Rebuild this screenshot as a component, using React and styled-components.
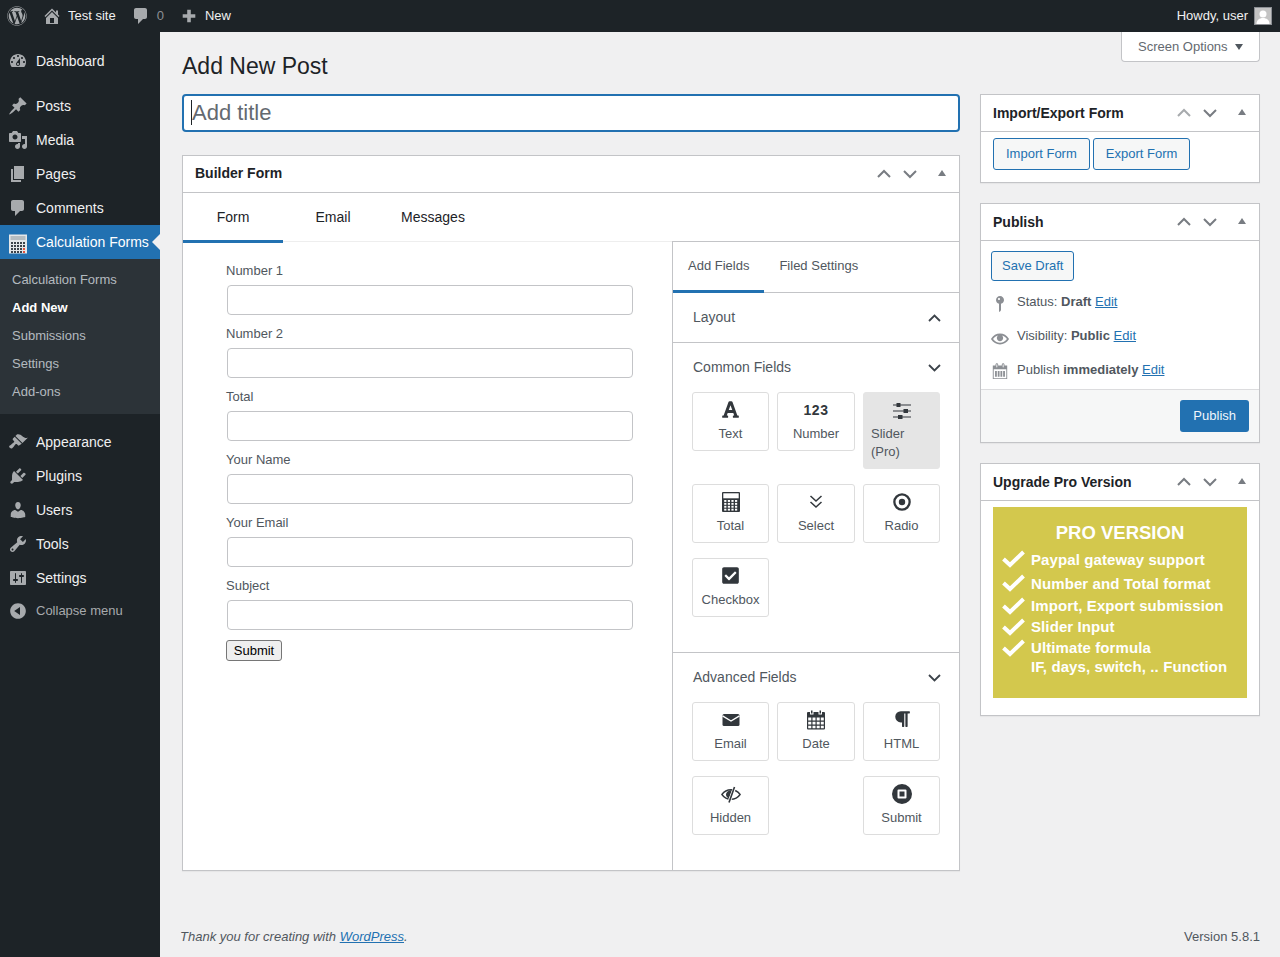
import React from "react";
import styled, { createGlobalStyle } from "styled-components";
import { FaWordpress, FaFont, FaParagraph, FaCheckSquare } from "react-icons/fa";

const GlobalStyle = createGlobalStyle`
  html, body { margin: 0; padding: 0; height: 100%; overflow: hidden; }
  body {
    background: #f0f0f1;
    color: #3c434a;
    font-family: "Liberation Sans", Arial, sans-serif;
    font-size: 13px;
    line-height: 1.4;
  }
  * { box-sizing: border-box; }
`;

// dashicons paths, all on a 20x20 grid
const paths = {
  dashboard: "M3.76 16h12.48c1.1-1.37 1.76-3.11 1.76-5 0-4.42-3.58-8-8-8s-8 3.58-8 8c0 1.89.66 3.63 1.76 5zM10 4c.55 0 1 .45 1 1s-.45 1-1 1-1-.45-1-1 .45-1 1-1zM6 6c.55 0 1 .45 1 1s-.45 1-1 1-1-.45-1-1 .45-1 1-1zm8 0c.55 0 1 .45 1 1s-.45 1-1 1-1-.45-1-1 .45-1 1-1zm-5.37 5.55L12 7v6c0 1.1-.9 2-2 2s-2-.9-2-2c0-.57.24-1.08.63-1.45zM4 10c.55 0 1 .45 1 1s-.45 1-1 1-1-.45-1-1 .45-1 1-1zm12 0c.55 0 1 .45 1 1s-.45 1-1 1-1-.45-1-1 .45-1 1-1zm-5 3c0-.55-.45-1-1-1s-1 .45-1 1 .45 1 1 1 1-.45 1-1z",
  post: "M10.44 3.02l1.82-1.82 6.36 6.35-1.83 1.82c-1.05-.68-2.48-.57-3.41.36l-.75.75c-.92.93-1.04 2.35-.35 3.41l-1.83 1.82-2.41-2.41-2.8 2.79c-.42.42-3.38 2.71-3.8 2.29s1.86-3.39 2.28-3.81l2.79-2.79L4.1 9.36l1.83-1.82c1.05.69 2.48.57 3.4-.36l.75-.75c.93-.92 1.05-2.35.36-3.41z",
  media: "M13 11V4c0-.55-.45-1-1-1h-1.67L9 1H5L3.67 3H2c-.55 0-1 .45-1 1v7c0 .55.45 1 1 1h10c.55 0 1-.45 1-1zM7 4.5c1.38 0 2.5 1.12 2.5 2.5S8.38 9.5 7 9.5 4.5 8.38 4.5 7 5.62 4.5 7 4.5zM14 6h5v10.5c0 1.38-1.12 2.5-2.5 2.5S14 17.88 14 16.5s1.12-2.5 2.5-2.5c.17 0 .34.02.5.05V9h-3V6zm-4 8.05V13h2v3.5c0 1.38-1.12 2.5-2.5 2.5S7 17.88 7 16.5 8.12 14 9.5 14c.17 0 .34.02.5.05z",
  page: "M6 15V2h10v13H6zm-1 1h8v2H3V5h2v11z",
  comment: "M5 2h9c1.1 0 2 .9 2 2v7c0 1.1-.9 2-2 2h-2l-5 5v-5H5c-1.1 0-2-.9-2-2V4c0-1.1.9-2 2-2z",
  appearance: "M14.48 11.06L7.41 3.99l1.5-1.5c.5-.56 2.3-.47 3.51.32 1.21.8 1.43 1.28 2.91 2.1 1.18.64 2.45 1.26 4.45.85zm-.71.71L6.7 4.7 4.93 6.47c-.39.39-.39 1.02 0 1.41l1.06 1.06c.39.39.39 1.03 0 1.42-.6.6-1.43 1.11-2.21 1.69-.35.26-.7.53-1.01.84C1.43 13.23.4 14.4 1.8 15.8c1.4 1.39 2.56.37 3.2-.28.31-.31.58-.66.84-1.01.58-.78 1.09-1.61 1.69-2.21.39-.39 1.03-.39 1.42 0l1.06 1.06c.39.39 1.02.39 1.41 0z",
  plugin: "M13.11 4.36L9.87 7.6 8 5.73l3.24-3.24c.35-.34 1.05-.2 1.56.32.52.51.66 1.21.31 1.55zm-8 1.77l.91-1.12 9.01 9.01-1.19.84c-.71.71-2.63 1.16-3.82 1.16H6.14L4.9 17.26c-.59.59-1.54.59-2.12 0-.59-.58-.59-1.53 0-2.12l1.24-1.24v-3.88c0-1.13.4-3.19 1.09-3.89zm7.26 3.97l3.24-3.24c.34-.35 1.04-.21 1.55.31.52.51.66 1.21.31 1.55l-3.24 3.25z",
  users: "M10 9.25c-2.27 0-2.73-3.44-2.73-3.44C7 4.02 7.82 2 9.97 2c2.16 0 2.98 2.02 2.71 3.81 0 0-.41 3.44-2.68 3.44zm0 2.57L12.72 10c2.39 0 4.52 2.33 4.52 4.53v2.49s-3.65 1.13-7.24 1.13c-3.65 0-7.24-1.13-7.24-1.13v-2.49c0-2.25 1.94-4.48 4.47-4.48z",
  tools: "M16.68 9.77c-1.34 1.34-3.3 1.67-4.95.99l-5.41 6.52c-.99.99-2.59.99-3.58 0s-.99-2.59 0-3.57l6.52-5.42c-.68-1.65-.35-3.61.99-4.95 1.28-1.28 3.12-1.62 4.72-1.06l-2.89 2.89 2.82 2.82 2.86-2.87c.53 1.58.18 3.39-1.08 4.65zM3.81 16.21c.4.39 1.04.39 1.43 0 .4-.4.4-1.04 0-1.43-.39-.4-1.03-.4-1.43 0-.39.39-.39 1.03 0 1.43z",
  settings: "M18 16V4c0-.55-.45-1-1-1H3c-.55 0-1 .45-1 1v12c0 .55.45 1 1 1h14c.55 0 1-.45 1-1zM8 11h1c.55 0 1 .45 1 1s-.45 1-1 1H8v1.5c0 .28-.22.5-.5.5s-.5-.22-.5-.5V13H6c-.55 0-1-.45-1-1s.45-1 1-1h1V5.5c0-.28.22-.5.5-.5s.5.22.5.5V11zm5-2h-1c-.55 0-1-.45-1-1s.45-1 1-1h1V5.5c0-.28.22-.5.5-.5s.5.22.5.5V7h1c.55 0 1 .45 1 1s-.45 1-1 1h-1v5.5c0 .28-.22.5-.5.5s-.5-.22-.5-.5V9z",
  collapse: "M10 2.16c4.33 0 7.84 3.51 7.84 7.84s-3.51 7.84-7.84 7.84S2.16 14.33 2.16 10 5.71 2.16 10 2.16zm2 11.72V6.12L6.18 9.97z",
  home: "M16 8.5l1.53 1.53-1.06 1.06L10 4.62l-6.47 6.47-1.06-1.06L10 2.5l4 4v-2h2v4zm-6-2.46l6 5.99V18H4v-5.97zM12 17v-5H8v5h4z",
  plus: "M17 8v4h-5v5H8v-5H3V8h5V3h4v5z",
  pin: "M14 6c0 1.86-1.28 3.41-3 3.86V16c0 1-2 2-2 2V9.86c-1.72-.45-3-2-3-3.86 0-2.21 1.79-4 4-4s4 1.79 4 4zM8 5c0 .55.45 1 1 1s1-.45 1-1-.45-1-1-1-1 .45-1 1z",
  eye: "M19.7 9.4C17.7 6 14 3.9 10 3.9S2.3 6 .3 9.4L0 10l.3.6c2 3.4 5.7 5.5 9.7 5.5s7.7-2.1 9.7-5.5l.3-.6-.3-.6zM10 14.1c-3.1 0-6-1.6-7.7-4.1C3.6 8 5.7 6.6 8 6.1c-.9.6-1.5 1.7-1.5 2.9 0 1.9 1.6 3.5 3.5 3.5s3.5-1.6 3.5-3.5c0-1.2-.6-2.3-1.5-2.9 2.3.5 4.4 1.9 5.7 3.9-1.7 2.5-4.6 4.1-7.7 4.1z",
  publishDate: "M15 4h3v15H2V4h3V3c0-.8.7-1.500 1.500-1.500S8 2.200 8 3v1h4V3c0-.8.7-1.500 1.500-1.500S15 2.200 15 3v1zM6 3v2.500c0 .3.2.5.5.5s.5-.2.5-.5V3c0-.3-.2-.5-.5-.5S6 2.700 6 3zm7 0v2.500c0 .3.2.5.5.5s.5-.2.5-.5V3c0-.3-.2-.5-.5-.5S13 2.700 13 3zm4 15V8H3v10h14zM4.500 10h2v6.500h-2zm3 0h2v6.500h-2zm3 0h2v6.500h-2zm3 0h2v6.500h-2z",
};

const Dash = ({ name, size = 20, width, box = "0 0 20 20" }) => (
  <svg width={width || size} height={size} viewBox={box} fill="currentColor" fillRule="evenodd">
    <path d={paths[name]} />
  </svg>
);

const Page = styled.div`
  display: flex;
  flex-direction: column;
  height: 957px;
  overflow: hidden;
`;

/* admin bar */
const AdminBar = styled.header`
  display: flex;
  align-items: center;
  justify-content: space-between;
  height: 32px;
  flex: none;
  background: #1d2327;
  color: #f0f0f1;
  padding: 0 8px 0 7px;
`;

const BarGroup = styled.div`
  display: flex;
  align-items: center;
`;

const BarItem = styled.span`
  display: flex;
  align-items: center;
  gap: ${(p) => p.$gap || 6}px;
  margin-left: ${(p) => p.$left || 0}px;
  color: #f0f0f1;
  svg { color: #a7aaad; flex: none; }
`;

const BarCount = styled.span`
  color: #8c8f94;
`;

const Avatar = styled.span`
  display: block;
  width: 18px;
  height: 18px;
  margin-left: 6px;
  border: 1px solid #8c8f94;
  background: #c4c4c4;
  overflow: hidden;
  svg { display: block; color: #fff; }
`;

const Layout = styled.div`
  display: flex;
  flex: 1;
  min-height: 0;
`;

/* left menu */
const Sidebar = styled.nav`
  width: 160px;
  flex: none;
  background: #1d2327;
  padding-top: 12px;
`;

const MenuItem = styled.div`
  position: relative;
  display: flex;
  align-items: center;
  height: 34px;
  margin-top: ${(p) => (p.$sep ? 11 : 0)}px;
  padding-left: 8px;
  font-size: 14px;
  color: ${(p) => (p.$active ? "#fff" : "#f0f0f1")};
  background: ${(p) => (p.$active ? "#2271b1" : "transparent")};
  white-space: nowrap;
`;

const MenuIcon = styled.span`
  display: flex;
  width: 28px;
  flex: none;
  padding-top: ${(p) => p.$drop || 0}px;
  color: #a7aaad;
`;

const MenuText = styled.span`
  padding-top: 2px;
`;

const MenuArrow = styled.span`
  position: absolute;
  right: 0;
  top: 9px;
  border: 8px solid transparent;
  border-right-color: #f0f0f1;
  border-left-width: 0;
`;

const SubMenu = styled.div`
  background: #2c3338;
  padding: 7px 0 8px;
`;

const SubItem = styled.div`
  height: 28px;
  line-height: 28px;
  padding-left: 12px;
  font-size: 13px;
  font-weight: ${(p) => (p.$current ? 600 : 400)};
  color: ${(p) => (p.$current ? "#fff" : "rgba(240, 246, 252, 0.7)")};
`;

const Collapse = styled.div`
  display: flex;
  align-items: center;
  height: 32px;
  padding-left: 8px;
  color: #a7aaad;
  svg { margin-right: 8px; }
`;

/* main column */
const Main = styled.main`
  flex: 1;
  min-width: 0;
  display: flex;
  flex-direction: column;
  padding: 0 20px 10px 22px;
`;

const TopRow = styled.div`
  display: flex;
  justify-content: space-between;
  align-items: flex-start;
  height: 62px;
  flex: none;
`;

const Heading = styled.h1`
  margin: 18px 0 0;
  font-size: 23px;
  font-weight: 400;
  line-height: 32px;
  color: #1d2327;
`;

const ScreenOptions = styled.div`
  display: flex;
  align-items: center;
  gap: 7px;
  width: 139px;
  height: 30px;
  padding: 2px 0 0 16px;
  background: #fff;
  border: 1px solid #c3c4c7;
  border-top: 0;
  border-radius: 0 0 4px 4px;
  color: #646970;
`;

const Caret = styled.i`
  display: block;
  width: 0;
  height: 0;
  margin-bottom: 2px;
  border-left: 4.5px solid transparent;
  border-right: 4.5px solid transparent;
  border-top: 6px solid #50575e;
`;

const Columns = styled.div`
  display: grid;
  grid-template-columns: 778px 280px;
  column-gap: 20px;
  align-items: start;
`;

const TitleWrap = styled.div`
  position: relative;
  margin-bottom: 23px;
`;

const TitleInput = styled.input`
  display: block;
  width: 100%;
  height: 38px;
  padding: 0 8px;
  border: 2px solid #2271b1;
  border-radius: 4px;
  background: #fff;
  outline: 0;
  font-family: inherit;
  font-size: 22px;
  &::placeholder { color: #646970; opacity: 1; }
`;

const TextCursor = styled.span`
  position: absolute;
  left: 9px;
  top: 6px;
  width: 1px;
  height: 25px;
  background: #1d2327;
`;

const Box = styled.section`
  background: #fff;
  border: 1px solid #c3c4c7;
  box-shadow: 0 1px 1px rgba(0, 0, 0, 0.04);
  margin-bottom: ${(p) => p.$gap || 0}px;
`;

const BoxHeader = styled.div`
  display: flex;
  align-items: center;
  height: 37px;
  padding: 0 12px;
  border-bottom: 1px solid #c3c4c7;
`;

const BoxTitle = styled.h2`
  flex: 1;
  margin: 0;
  padding-top: ${(p) => (p.$side ? 2 : 0)}px;
  font-size: 14px;
  font-weight: 600;
  color: #1d2327;
`;

const BoxControls = styled.div`
  display: flex;
  align-items: center;
  margin-right: 1px;
`;

const Chev = styled.svg`
  display: block;
  width: 16px;
  height: 10px;
  margin-right: 10px;
  fill: none;
  stroke: ${(p) => (p.$off ? "#a7aaad" : "#787c82")};
  stroke-width: 2;
`;

const UpTriangle = styled.i`
  display: block;
  margin: 0 0 2px 10px;
  width: 0;
  height: 0;
  border-left: 4.5px solid transparent;
  border-right: 4.5px solid transparent;
  border-bottom: 6px solid #787c82;
`;

const Controls = ({ upOff }) => (
  <BoxControls>
    <Chev viewBox="0 0 16 10" $off={upOff}><path d="M2 8l6-6 6 6" /></Chev>
    <Chev viewBox="0 0 16 10"><path d="M2 2l6 6 6-6" /></Chev>
    <UpTriangle />
  </BoxControls>
);

/* builder */
const BuilderTabs = styled.div`
  display: flex;
  height: 49px;
  border-bottom: 1px solid #eee;
`;

const BuilderTab = styled.div`
  width: 100px;
  height: 50px;
  padding-top: 14px;
  text-align: center;
  font-size: 14px;
  line-height: 20px;
  color: #1d2327;
  border-bottom: 3px solid ${(p) => (p.$active ? "#2271b1" : "transparent")};
`;

const BuilderBody = styled.div`
  display: grid;
  grid-template-columns: 489px 287px;
`;

const FormPane = styled.div`
  padding: 18px 0 0 43px;
`;

const FieldLabel = styled.label`
  display: block;
  height: 20px;
  line-height: 22px;
  margin-bottom: 5px;
  color: #50575e;
`;

const FieldInput = styled.input`
  display: block;
  width: 406px;
  height: 30px;
  margin: 0 0 8px 1px;
  border: 1px solid #c3c4c7;
  border-radius: 4px;
  background: #fff;
`;

const SubmitButton = styled.button`
  display: block;
  width: 56px;
  height: 21px;
  margin-top: 10px;
  padding: 0;
  border: 1px solid #767676;
  border-radius: 3px;
  background: #efefef;
  color: #000;
  font-family: "Liberation Sans", Arial, sans-serif;
  font-size: 13px;
`;

const FieldsPane = styled.div`
  border-left: 1px solid #c3c4c7;
  border-top: 1px solid #c3c4c7;
  margin-top: -1px;
  height: 629px;
`;

const PaneTabs = styled.div`
  display: flex;
  height: 51px;
  border-bottom: 1px solid #c3c4c7;
`;

const PaneTab = styled.div`
  height: 51px;
  padding: 15px 15px 0;
  line-height: 18px;
  color: #50575e;
  border-bottom: 3px solid ${(p) => (p.$active ? "#2271b1" : "transparent")};
`;

const Section = styled.div`
  height: ${(p) => p.$height}px;
  border-bottom: ${(p) => (p.$last ? "0" : "1px solid #c3c4c7")};
`;

const SectionHead = styled.div`
  display: flex;
  align-items: center;
  justify-content: space-between;
  height: 49px;
  padding: 0 18px 0 20px;
  font-size: 14px;
  color: #50575e;
`;

const SectionChev = styled.svg`
  display: block;
  width: 13px;
  height: 8px;
  fill: none;
  stroke: #3c434a;
  stroke-width: 1.8;
`;

const FieldGrid = styled.div`
  display: grid;
  grid-template-columns: 77px 78px 77px;
  column-gap: 8px;
  row-gap: 15px;
  margin-left: 19px;
  align-items: start;
`;

const FieldCard = styled.div`
  grid-column: ${(p) => p.$col || "auto"};
  min-height: 59px;
  padding: 7px 7px 7px;
  border: 1px solid ${(p) => (p.$pro ? "#e5e5e5" : "#ddd")};
  border-radius: 3px;
  background: ${(p) => (p.$pro ? "#e5e5e5" : "#fff")};
  color: #50575e;
  text-align: ${(p) => (p.$pro ? "left" : "center")};
  line-height: 18px;
  white-space: nowrap;
`;

const FieldIcon = styled.div`
  display: flex;
  justify-content: center;
  height: 25px;
  color: #32373c;
`;

const NumberGlyph = styled.span`
  font-size: 14px;
  line-height: 20px;
  font-weight: 700;
  letter-spacing: 0.5px;
`;

const totalCells = [0, 1, 2, 3].flatMap((r) =>
  [0, 1, 2, 3].map((c) => ({ x: 2.2 + c * 3.6, y: 8 + r * 2.9 }))
);

const TotalIcon = () => (
  <svg width="18" height="20" viewBox="0 0 18 20">
    <rect width="18" height="20" rx="1" fill="currentColor" />
    <rect x="1.300" y="1.300" width="15.400" height="5" fill="#fff" />
    {totalCells.map((c) => (
      <rect key={`${c.x}-${c.y}`} x={c.x} y={c.y} width="2.200" height="1.900" fill="#fff" />
    ))}
  </svg>
);

const SliderIcon = () => (
  <svg width="18" height="20" viewBox="0 0 18 20" fill="currentColor">
    <path d="M0 4.600h18v1H0zM0 10.600h18v1H0zM0 16.600h18v1H0z" />
    <path d="M3.500 3h4v4h-4zM10.500 9h4.500v4h-4.500zM5 15h4.500v4H5z" />
  </svg>
);

const SelectIcon = () => (
  <svg width="20" height="20" viewBox="0 0 20 20" fill="none" stroke="currentColor" strokeWidth="1.500">
    <path d="M4.500 4l5.500 5 5.500-5M4.500 10l5.500 5 5.500-5" />
  </svg>
);

const RadioIcon = () => (
  <svg width="20" height="20" viewBox="0 0 20 20" fill="currentColor" fillRule="evenodd">
    <path d="M10 1.200a8.800 8.800 0 1 1 0 17.600 8.800 8.800 0 0 1 0-17.600zm0 2.300a6.500 6.500 0 1 0 0 13 6.500 6.500 0 0 0 0-13z" />
    <circle cx="10" cy="10" r="3.200" />
  </svg>
);

const MailIcon = () => (
  <svg width="20" height="20" viewBox="0 0 20 20">
    <rect x="1.500" y="4" width="17" height="12" rx="1.500" fill="currentColor" />
    <path d="M1.500 5.800L10 11l8.500-5.200" fill="none" stroke="#fff" strokeWidth="1.400" />
  </svg>
);

const DateIcon = () => (
  <svg width="20" height="20" viewBox="0 0 20 20" fill="currentColor" fillRule="evenodd">
    <path d="M5 .500h1.500v3H5zM13.500.500H15v3h-1.500z" />
    <path d="M2 2h2v2.500h3.500V2h5v2.500H16V2h2a1 1 0 0 1 1 1v15.500a1 1 0 0 1-1 1H2a1 1 0 0 1-1-1V3a1 1 0 0 1 1-1zm.2 5.500v3h3.100v-3zm4.300 0v3h3v-3zm4.200 0v3h3v-3zm4.100 0v3h3v-3zM2.200 11.700v2.900h3.100v-2.900zm4.300 0v2.900h3v-2.900zm4.200 0v2.900h3v-2.900zm4.100 0v2.900h3v-2.900zM2.200 15.800v2.500h3.100v-2.500zm4.300 0v2.500h3v-2.500zm4.200 0v2.500h3v-2.500zm4.100 0v2.500h3v-2.500z" />
  </svg>
);

const HiddenIcon = () => (
  <svg width="20" height="20" viewBox="0 0 20 20" fill="none" stroke="currentColor">
    <path strokeWidth="1.400" d="M.9 10.500C3 7.500 6 5.700 10 5.700s7 1.800 9.100 4.800C17 13.500 14 15.300 10 15.300S3 13.500.9 10.500z" />
    <path fill="currentColor" stroke="none" d="M11 6.200C7.300 6.200 5 8.300 5 10.500c0 1.600 1 3 3 4z" />
    <path stroke="#fff" strokeWidth="3.200" d="M13.500 4L8.500 17" />
    <path strokeWidth="1.600" d="M13.500 3L8 18.500" />
  </svg>
);

const StopIcon = () => (
  <svg width="20" height="20" viewBox="0 0 20 20" fill="currentColor" fillRule="evenodd">
    <path d="M10 0a10 10 0 1 1 0 20 10 10 0 0 1 0-20zM6.500 5.500a1 1 0 0 0-1 1v7a1 1 0 0 0 1 1h7a1 1 0 0 0 1-1v-7a1 1 0 0 0-1-1zm1 2h5v5h-5z" />
  </svg>
);

const commonFields = [
  { label: "Text", icon: <FaFont size={19} /> },
  { label: "Number", icon: <NumberGlyph>123</NumberGlyph> },
  { label: "Slider (Pro)", icon: <SliderIcon />, pro: true },
  { label: "Total", icon: <TotalIcon /> },
  { label: "Select", icon: <SelectIcon /> },
  { label: "Radio", icon: <RadioIcon /> },
  { label: "Checkbox", icon: <FaCheckSquare size={19} /> },
];

const advancedFields = [
  { label: "Email", icon: <MailIcon /> },
  { label: "Date", icon: <DateIcon /> },
  { label: "HTML", icon: <FaParagraph size={18} /> },
  { label: "Hidden", icon: <HiddenIcon /> },
  { label: "Submit", icon: <StopIcon />, col: 3 },
];

const formFields = ["Number 1", "Number 2", "Total", "Your Name", "Your Email", "Subject"];

/* right column */
const SideColumn = styled.aside`
  display: flex;
  flex-direction: column;
`;

const ExportBody = styled.div`
  display: flex;
  gap: 3px;
  padding: 6px 12px 12px;
`;

const OutlineButton = styled.span`
  display: inline-block;
  height: ${(p) => p.$h || 32}px;
  line-height: ${(p) => (p.$h || 32) - 2}px;
  padding: 0 ${(p) => p.$pad || 12}px;
  border: 1px solid #2271b1;
  border-radius: 3px;
  background: #f6f7f7;
  color: #2271b1;
`;

const PublishTop = styled.div`
  padding: 10px 10px 0;
`;

const MetaRows = styled.div`
  margin-top: 3px;
`;

const MetaRow = styled.div`
  display: flex;
  align-items: center;
  height: 34px;
  color: #50575e;
`;

const MetaIcon = styled.span`
  display: flex;
  flex: none;
  width: 18px;
  margin-right: 8px;
  padding-top: ${(p) => p.$drop}px;
  color: #8c8f94;
`;

const MetaText = styled.span`
  padding-top: 2px;
`;

const EditLink = styled.a`
  color: #2271b1;
  text-decoration: underline;
`;

const PublishFoot = styled.div`
  display: flex;
  justify-content: flex-end;
  margin-top: 3px;
  padding: 10px;
  background: #f6f7f7;
  border-top: 1px solid #dcdcde;
`;

const PrimaryButton = styled.span`
  display: block;
  height: 32px;
  line-height: 32px;
  padding: 0 13px;
  border-radius: 3px;
  background: #2271b1;
  color: #f0f6fc;
`;

const UpgradeBody = styled.div`
  padding: 6px 12px 17px;
`;

const ProBanner = styled.div`
  height: 191px;
  background: #d3c84d;
  color: #fff;
  font-weight: 700;
  padding-top: 15px;
`;

const ProTitle = styled.div`
  text-align: center;
  font-size: 18.500px;
  line-height: 22px;
  margin-bottom: 3px;
`;

const ProRow = styled.div`
  display: flex;
  align-items: center;
  height: ${(p) => p.$h}px;
  padding-left: 9px;
  font-size: 15px;
  letter-spacing: 0.1px;
  white-space: nowrap;
  svg { flex: none; margin-right: 6px; visibility: ${(p) => (p.$plain ? "hidden" : "visible")}; }
`;

const proRows = [
  { text: "Paypal gateway support", h: 24 },
  { text: "Number and Total format", h: 24 },
  { text: "Import, Export submission", h: 21 },
  { text: "Slider Input", h: 21 },
  { text: "Ultimate formula", h: 21 },
  { text: "IF, days, switch, .. Function", h: 17, plain: true },
];

const Check = () => (
  <svg width="23" height="18" viewBox="0 0 23 18" fill="none" stroke="#fff" strokeWidth="4">
    <path d="M1.500 9l6.500 6L21.500 2" />
  </svg>
);

const calcCells = [8, 11, 14, 17].flatMap((y) =>
  [3, 6, 9, 12, 15].map((x) => ({ x, y, red: x === 15 && y > 11 }))
);

const CalcIcon = () => (
  <svg width="20" height="20" viewBox="0 0 20 20">
    <rect x="1" y="0.500" width="18" height="19" fill="#e4e7e9" />
    <rect x="2.500" y="2" width="15" height="4" fill="#b4bcc1" />
    {calcCells.map((c) => (
      <rect key={`${c.x}-${c.y}`} x={c.x} y={c.y} width="2" height="2"
        fill={c.red ? "#e5533d" : "#3c434a"} />
    ))}
  </svg>
);

const upper = [
  { icon: "post", label: "Posts", sep: true },
  { icon: "media", label: "Media" },
  { icon: "page", label: "Pages" },
  { icon: "comment", label: "Comments" },
];

const lower = [
  { icon: "appearance", label: "Appearance", sep: true },
  { icon: "plugin", label: "Plugins" },
  { icon: "users", label: "Users" },
  { icon: "tools", label: "Tools" },
  { icon: "settings", label: "Settings" },
];

const subItems = ["Calculation Forms", "Add New", "Submissions", "Settings", "Add-ons"];

const FieldButtons = ({ items }) => (
  <FieldGrid>
    {items.map((f) => (
      <FieldCard key={f.label} $pro={f.pro} $col={f.col}>
        <FieldIcon>{f.icon}</FieldIcon>
        {f.pro ? <>Slider<br />(Pro)</> : f.label}
      </FieldCard>
    ))}
  </FieldGrid>
);

const FooterBar = styled.footer`
  display: flex;
  justify-content: space-between;
  margin: auto 0 0 -2px;
  color: #50575e;
  line-height: 20px;
`;

const Thanks = styled.em`
  font-style: italic;
`;

export default function App() {
  return (
    <Page>
      <GlobalStyle />
      <AdminBar>
        <BarGroup>
          <BarItem><FaWordpress size={20} /></BarItem>
          <BarItem $left={15}><Dash name="home" />Test site</BarItem>
          <BarItem $left={15}><Dash name="comment" /><BarCount>0</BarCount></BarItem>
          <BarItem $left={16} $gap={7}><Dash name="plus" size={18} />New</BarItem>
        </BarGroup>
        <BarGroup>
          Howdy, user
          <Avatar>
            <svg width="16" height="16" viewBox="0 0 16 16" fill="currentColor">
              <circle cx="8" cy="6" r="3.500" />
              <path d="M1.500 16c0-4 3-6 6.500-6s6.500 2 6.500 6z" />
            </svg>
          </Avatar>
        </BarGroup>
      </AdminBar>

      <Layout>
        <Sidebar>
          <MenuItem><MenuIcon><Dash name="dashboard" /></MenuIcon><MenuText>Dashboard</MenuText></MenuItem>
          {upper.map((m) => (
            <MenuItem key={m.label} $sep={m.sep}>
              <MenuIcon><Dash name={m.icon} /></MenuIcon><MenuText>{m.label}</MenuText>
            </MenuItem>
          ))}
          <MenuItem $active>
            <MenuIcon $drop={4}><CalcIcon /></MenuIcon><MenuText>Calculation Forms</MenuText>
            <MenuArrow />
          </MenuItem>
          <SubMenu>
            {subItems.map((s) => (
              <SubItem key={s} $current={s === "Add New"}>{s}</SubItem>
            ))}
          </SubMenu>
          {lower.map((m) => (
            <MenuItem key={m.label} $sep={m.sep}>
              <MenuIcon><Dash name={m.icon} /></MenuIcon><MenuText>{m.label}</MenuText>
            </MenuItem>
          ))}
          <Collapse><Dash name="collapse" />Collapse menu</Collapse>
        </Sidebar>

        <Main>
          <TopRow>
            <Heading>Add New Post</Heading>
            <ScreenOptions>Screen Options<Caret /></ScreenOptions>
          </TopRow>

          <Columns>
            <div>
              <TitleWrap>
                <TitleInput placeholder="Add title" readOnly />
                <TextCursor />
              </TitleWrap>

              <Box>
                <BoxHeader>
                  <BoxTitle>Builder Form</BoxTitle>
                  <Controls />
                </BoxHeader>
                <BuilderTabs>
                  <BuilderTab $active>Form</BuilderTab>
                  <BuilderTab>Email</BuilderTab>
                  <BuilderTab>Messages</BuilderTab>
                </BuilderTabs>
                <BuilderBody>
                  <FormPane>
                    {formFields.map((f) => (
                      <div key={f}>
                        <FieldLabel>{f}</FieldLabel>
                        <FieldInput readOnly />
                      </div>
                    ))}
                    <SubmitButton>Submit</SubmitButton>
                  </FormPane>
                  <FieldsPane>
                    <PaneTabs>
                      <PaneTab $active>Add Fields</PaneTab>
                      <PaneTab>Filed Settings</PaneTab>
                    </PaneTabs>
                    <Section $height={50}>
                      <SectionHead>
                        Layout
                        <SectionChev viewBox="0 0 13 8"><path d="M1 7l5.500-5.500L12 7" /></SectionChev>
                      </SectionHead>
                    </Section>
                    <Section $height={310}>
                      <SectionHead>
                        Common Fields
                        <SectionChev viewBox="0 0 13 8"><path d="M1 1l5.500 5.500L12 1" /></SectionChev>
                      </SectionHead>
                      <FieldButtons items={commonFields} />
                    </Section>
                    <Section $last $height={217}>
                      <SectionHead>
                        Advanced Fields
                        <SectionChev viewBox="0 0 13 8"><path d="M1 1l5.500 5.500L12 1" /></SectionChev>
                      </SectionHead>
                      <FieldButtons items={advancedFields} />
                    </Section>
                  </FieldsPane>
                </BuilderBody>
              </Box>
            </div>

            <SideColumn>
              <Box $gap={20}>
                <BoxHeader>
                  <BoxTitle $side>Import/Export Form</BoxTitle>
                  <Controls upOff />
                </BoxHeader>
                <ExportBody>
                  <OutlineButton>Import Form</OutlineButton>
                  <OutlineButton>Export Form</OutlineButton>
                </ExportBody>
              </Box>

              <Box $gap={20}>
                <BoxHeader>
                  <BoxTitle $side>Publish</BoxTitle>
                  <Controls />
                </BoxHeader>
                <PublishTop>
                  <OutlineButton $h={30} $pad={10}>Save Draft</OutlineButton>
                  <MetaRows>
                    <MetaRow>
                      <MetaIcon $drop={6}><Dash name="pin" width={18} box="1 0 18 20" /></MetaIcon>
                      <MetaText>Status: <b>Draft</b> <EditLink>Edit</EditLink></MetaText>
                    </MetaRow>
                    <MetaRow>
                      <MetaIcon $drop={8}><Dash name="eye" size={18} /></MetaIcon>
                      <MetaText>Visibility: <b>Public</b> <EditLink>Edit</EditLink></MetaText>
                    </MetaRow>
                    <MetaRow>
                      <MetaIcon $drop={3}><Dash name="publishDate" size={18} /></MetaIcon>
                      <MetaText>Publish <b>immediately</b> <EditLink>Edit</EditLink></MetaText>
                    </MetaRow>
                  </MetaRows>
                </PublishTop>
                <PublishFoot><PrimaryButton>Publish</PrimaryButton></PublishFoot>
              </Box>

              <Box>
                <BoxHeader>
                  <BoxTitle $side>Upgrade Pro Version</BoxTitle>
                  <Controls />
                </BoxHeader>
                <UpgradeBody>
                  <ProBanner>
                    <ProTitle>PRO VERSION</ProTitle>
                    {proRows.map((r) => (
                      <ProRow key={r.text} $h={r.h} $plain={r.plain}><Check />{r.text}</ProRow>
                    ))}
                  </ProBanner>
                </UpgradeBody>
              </Box>
            </SideColumn>
          </Columns>

          <FooterBar>
            <Thanks>Thank you for creating with <EditLink>WordPress</EditLink>.</Thanks>
            <span>Version 5.8.1</span>
          </FooterBar>
        </Main>
      </Layout>
    </Page>
  );
}
